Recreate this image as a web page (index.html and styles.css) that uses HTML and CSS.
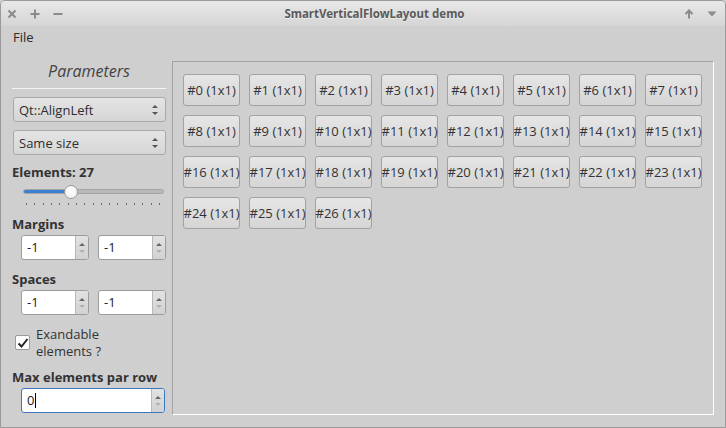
FILE: index.html
```html
<!DOCTYPE html>
<html>
<head>
<meta charset="utf-8">
<link rel="stylesheet" href="styles.css">
</head>
<body>
<div class="window">
  <div class="titlebar">
    <div class="tb-left">
      <svg width="10" height="10" viewBox="0 0 10 10"><path d="M1.5 1.5L8.5 8.5M8.5 1.5L1.5 8.5" stroke="#8a8a8a" stroke-width="2"/></svg>
      <svg width="10" height="10" viewBox="0 0 10 10"><path d="M5 0.5V9.5M0.5 5H9.5" stroke="#8a8a8a" stroke-width="2"/></svg>
      <svg width="10" height="10" viewBox="0 0 10 10"><path d="M0.5 5H9.5" stroke="#8a8a8a" stroke-width="2"/></svg>
    </div>
    <div class="title">SmartVerticalFlowLayout demo</div>
    <div class="tb-right">
      <svg width="10" height="10" viewBox="0 0 10 10"><path d="M5 9.5V2M1.5 5L5 1.5L8.5 5" stroke="#8a8a8a" stroke-width="2" fill="none"/></svg>
      <svg width="10" height="10" viewBox="0 0 10 10"><path d="M0.5 2.5H9.5L5 7.5Z" fill="#8a8a8a"/></svg>
    </div>
  </div>
  <div class="menubar"><span class="menu">File</span></div>
  <div class="main">
    <div class="params">
      <div class="ptitle">Parameters</div>
      <div class="sep"></div>
      <div class="combo"><span>Qt::AlignLeft</span><span class="carrows"><i class="up"></i><i class="down"></i></span></div>
      <div class="combo"><span>Same size</span><span class="carrows"><i class="up"></i><i class="down"></i></span></div>
      <div class="label lb-el">Elements: 27</div>
      <div class="slider">
        <div class="groove"><div class="fill"></div></div>
        <div class="handle"></div>
      </div>
      <div class="ticks">
        <i></i><i></i><i></i><i></i><i></i><i></i><i></i><i></i><i></i><i></i><i></i><i></i><i></i><i></i><i></i><i></i><i></i>
      </div>
      <div class="label lb-m">Margins</div>
      <div class="spinrow">
        <div class="spin"><span class="val">-1</span><span class="sbtn"><i class="up"></i><i class="down"></i></span></div>
        <div class="spin"><span class="val">-1</span><span class="sbtn"><i class="up"></i><i class="down"></i></span></div>
      </div>
      <div class="label lb-s">Spaces</div>
      <div class="spinrow">
        <div class="spin"><span class="val">-1</span><span class="sbtn"><i class="up"></i><i class="down"></i></span></div>
        <div class="spin"><span class="val">-1</span><span class="sbtn"><i class="up"></i><i class="down"></i></span></div>
      </div>
      <div class="check">
        <span class="box"><svg width="12" height="12" viewBox="0 0 12 12"><path d="M1.5 6.5L4.5 9.5L10.5 2" stroke="#222" stroke-width="2" fill="none"/></svg></span>
        <div class="ctext"><div class="cl">Exandable</div><div class="cl">elements ?</div></div>
      </div>
      <div class="label lb-x">Max elements par row</div>
      <div class="spinrow">
        <div class="spin wide focus"><span class="val">0<span class="caret"></span></span><span class="sbtn"><i class="up"></i><i class="down"></i></span></div>
      </div>
    </div>
    <div class="frame">
      <div class="grid">
        <button class="btn">#0 (1x1)</button>
        <button class="btn">#1 (1x1)</button>
        <button class="btn">#2 (1x1)</button>
        <button class="btn">#3 (1x1)</button>
        <button class="btn">#4 (1x1)</button>
        <button class="btn">#5 (1x1)</button>
        <button class="btn">#6 (1x1)</button>
        <button class="btn">#7 (1x1)</button>
        <button class="btn">#8 (1x1)</button>
        <button class="btn">#9 (1x1)</button>
        <button class="btn">#10 (1x1)</button>
        <button class="btn">#11 (1x1)</button>
        <button class="btn">#12 (1x1)</button>
        <button class="btn">#13 (1x1)</button>
        <button class="btn">#14 (1x1)</button>
        <button class="btn">#15 (1x1)</button>
        <button class="btn">#16 (1x1)</button>
        <button class="btn">#17 (1x1)</button>
        <button class="btn">#18 (1x1)</button>
        <button class="btn">#19 (1x1)</button>
        <button class="btn">#20 (1x1)</button>
        <button class="btn">#21 (1x1)</button>
        <button class="btn">#22 (1x1)</button>
        <button class="btn">#23 (1x1)</button>
        <button class="btn">#24 (1x1)</button>
        <button class="btn">#25 (1x1)</button>
        <button class="btn">#26 (1x1)</button>
      </div>
    </div>
  </div>
</div>
</body>
</html>
```
FILE: styles.css
```css
* { box-sizing: border-box; }
html, body { margin: 0; padding: 0; }
body {
  width: 726px; height: 428px; overflow: hidden;
  font-family: "Open Sans", "Noto Sans", sans-serif;
  font-size: 13px; color: #333;
  background: #cfcfcf;
}
.window {
  width: 726px; height: 428px;
  border: 1px solid #9a9a9a;
  border-radius: 5px 5px 0 0;
  background: #cfcfcf;
  display: flex; flex-direction: column;
  overflow: hidden;
}
.titlebar {
  height: 25px; flex: none;
  background: linear-gradient(#e8e8e8, #d5d5d5);
  display: flex; align-items: center;
  position: relative;
}
.tb-left { display: flex; gap: 13px; padding-left: 6px; align-items: center; }
.tb-right { display: flex; gap: 13px; margin-left: auto; padding-right: 8px; align-items: center; }
.title {
  position: absolute; left: 70px; right: 47px; top: 0; line-height: 25px;
  text-align: center; font-family: "Noto Sans", sans-serif; font-weight: bold;
  font-size: 11.5px; color: #5a5a5a;
  text-shadow: 0 1px 0 rgba(255,255,255,0.5);
  pointer-events: none;
}
.menubar { height: 22px; flex: none; display: flex; align-items: center; padding-left: 12px; }
.menu { font-size: 13px; color: #2a2a2a; }
.main { flex: 1; display: flex; padding: 13px 11px 12px 11px; gap: 6px; min-height: 0; }
.params { width: 154px; flex: none; display: flex; flex-direction: column; }
.ptitle {
  font-style: italic; font-size: 16px; text-align: center; color: #444;
  line-height: 20px; height: 20px;
}
.sep { height: 1px; flex: none; background: #f4f4f4; margin: 7px 0 8px 0; }
.combo {
  height: 25px; flex: none; margin: 0 0 8px 1px;
  border: 1px solid #a9a9a9; border-radius: 3px;
  background: linear-gradient(#e4e4e4, #d6d6d6);
  display: flex; align-items: center; padding-left: 5px; padding-right: 7px;
  color: #2e2e2e;
}
.combo span:first-child { flex: 1; }
.carrows, .sbtn { display: flex; flex-direction: column; align-items: center; gap: 4px; }
.carrows i, .sbtn i { display: block; width: 0; height: 0; border-left: 3px solid transparent; border-right: 3px solid transparent; }
.carrows i.up { border-bottom: 3px solid #555; }
.carrows i.down { border-top: 3px solid #555; }
.label { font-weight: bold; color: #333; line-height: 16px; height: 16px; flex: none; white-space: nowrap; }
.lb-el { margin-top: 1px; }
.slider { position: relative; height: 14px; flex: none; margin: 5px 2px 0 11px; }
.groove {
  position: absolute; left: 0; right: 0; top: 4px; height: 5px;
  border-radius: 3px; background: #b9b9b9; border: 1px solid #a4a4a4;
  overflow: hidden;
}
.fill { width: 48px; height: 100%; background: #3b7fd3; }
.handle {
  position: absolute; left: 41px; top: 0; width: 14px; height: 14px;
  border-radius: 50%; background: radial-gradient(circle at 50% 40%, #ffffff, #ececec);
  border: 1px solid #9a9a9a;
}
.ticks { display: flex; flex: none; justify-content: space-between; padding: 0 6px 0 14px; margin-top: 4px; height: 3px; }
.ticks i { display: block; width: 1px; height: 2px; background: #666; }
.lb-m { margin-top: 10px; }
.lb-s { margin-top: 11px; }
.lb-x { margin-top: 10px; }
.spinrow { display: flex; flex: none; gap: 9px; padding-left: 9px; margin-top: 3px; }
.spin {
  width: 68px; height: 25px; border: 1px solid #9c9c9c; border-radius: 3px;
  background: #fff; display: flex; overflow: hidden;
}
.spin.wide { width: 144px; }
.spin.focus { border-color: #3b78c4; }
.spin .val { flex: 1; line-height: 23px; padding-left: 5px; color: #222; }
.caret { display: inline-block; width: 1px; height: 15px; background: #000; vertical-align: -3px; margin-left: 1px; }
.sbtn {
  width: 13px; background: linear-gradient(#e2e2e2, #d2d2d2); border-left: 1px solid #b8b8b8;
  justify-content: center;
}
.sbtn i.up { border-bottom: 3px solid #666; }
.sbtn i.down { border-top: 3px solid #b0b0b0; }
.check { display: flex; flex: none; gap: 6px; margin-top: 12px; padding-left: 3px; height: 32px; }
.box {
  width: 15px; height: 15px; margin-top: 8px; border: 1px solid #9a9a9a; border-radius: 2px;
  background: #fff; display: flex; align-items: center; justify-content: center;
}
.ctext { display: flex; flex-direction: column; color: #333; margin-top: -1px; }
.cl { height: 17px; line-height: 17px; white-space: nowrap; }
.frame {
  flex: 1; border: 1px solid; border-color: #a3a3a3 #ffffff #ffffff #a3a3a3;
  padding: 12px 10px;
}
.grid { display: grid; grid-template-columns: repeat(8, 57px); column-gap: 9px; row-gap: 9px; }
.btn {
  height: 32px; width: 57px; padding: 0;
  font-family: "Open Sans", "Noto Sans", sans-serif; font-size: 13px; color: #333;
  border: 1px solid #a2a2a2; border-radius: 3px;
  background: linear-gradient(#e6e6e6, #d5d5d5);
  white-space: nowrap; overflow: visible;
  display: flex; align-items: center; justify-content: center;
}
```
